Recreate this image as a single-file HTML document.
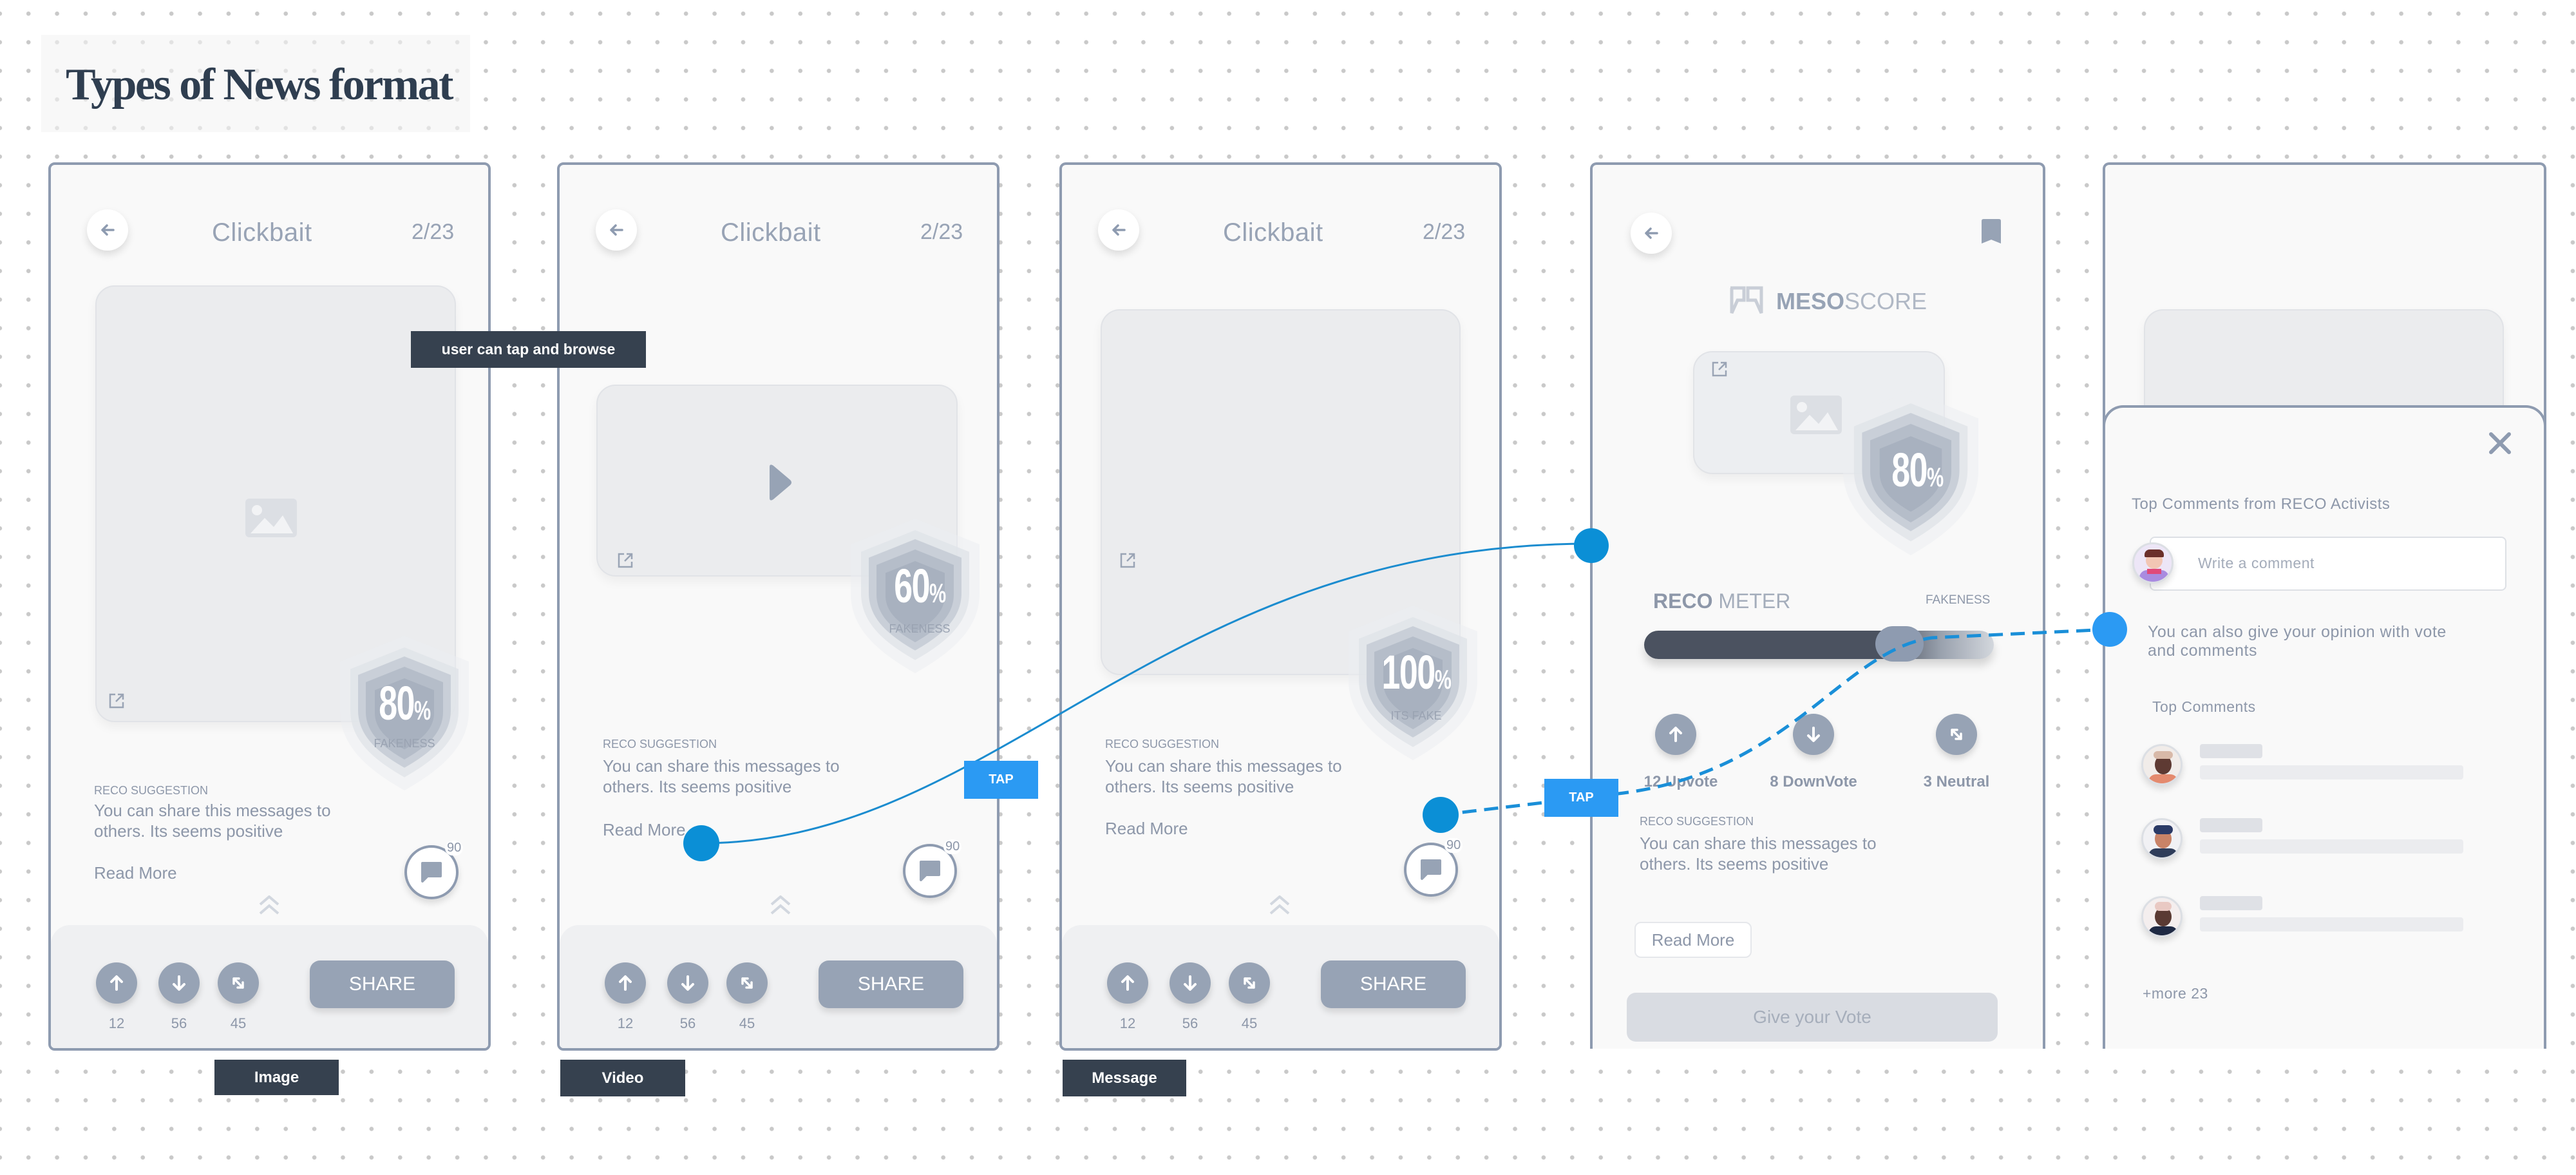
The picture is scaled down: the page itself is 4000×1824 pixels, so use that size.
<!DOCTYPE html>
<html><head><meta charset="utf-8"><style>
*{margin:0;padding:0;box-sizing:border-box}
body{width:4000px;height:1824px;position:relative;overflow:hidden;background:#fff;font-family:"Liberation Sans",sans-serif;color:#8d97a9}
.dots{position:absolute;left:0;top:0;width:4000px;height:1824px;background-image:radial-gradient(circle,#c9c9c9 3px,transparent 3.6px);background-size:44.4px 44.4px;background-position:22px -1px}
.a{position:absolute}
.ph{position:absolute;background:#f9f9f9;border:4px solid #8e9bb0;border-radius:10px;overflow:hidden}
.back{position:absolute;width:64px;height:64px;border-radius:50%;background:#fff;box-shadow:0 6px 12px rgba(0,0,0,.12)}
.t{position:absolute;white-space:nowrap}
.card{position:absolute;background:#ebecee;border:2px solid #e1e3e7;border-radius:30px;box-shadow:0 8px 16px rgba(0,0,0,.05)}
.panel{position:absolute;left:0;right:0;top:1180px;bottom:0;background:#eff0f2;border-radius:30px 30px 0 0}
.cb{position:absolute;width:64px;height:64px;border-radius:50%;background:#97a3b5;box-shadow:0 6px 10px rgba(0,0,0,.15)}
.share{position:absolute;width:225px;height:74px;border-radius:16px;background:#97a3b5;color:#fff;font-size:30px;text-align:center;line-height:74px;box-shadow:0 6px 10px rgba(0,0,0,.12)}
.num{position:absolute;font-size:22px;width:60px;text-align:center;color:#8d97a9}
.lbl{position:absolute;background:#36414f;color:#fff;font-weight:bold;font-size:24px;text-align:center}
.body{font-size:26px;line-height:32px}
.small{font-size:18px}
.com{position:absolute;width:84px;height:84px;border-radius:50%;background:#fff;border:4px solid #8e9bb0;box-shadow:0 6px 10px rgba(0,0,0,.12)}
.shnum{position:absolute;color:#fff;font-weight:bold;text-align:center;white-space:nowrap;transform:scaleX(.7);letter-spacing:-2px}
.bar1{position:absolute;height:22px;width:97px;background:#dfe1e6;border-radius:4px}
.bar2{position:absolute;height:22px;width:409px;background:#ebecef;border-radius:4px}
.av{position:absolute;width:64px;height:64px;border-radius:50%;border:3px solid #dcdfe4;background:#f3f0f5;overflow:hidden;box-shadow:0 6px 10px rgba(0,0,0,.12)}
.tap{position:absolute;background:#2b9af3;color:#fff;font-weight:bold;font-size:20px;text-align:center}
.dot{position:absolute;border-radius:50%;background:#0b8fd6}
.ttl{position:absolute;font-size:40px;color:#98a3b5;line-height:46px;left:250px;top:82px;letter-spacing:.5px}
</style></head><body>
<div class="dots"></div>

<div class="a" style="left:64px;top:54px;width:666px;height:151px;background:rgba(244,244,244,.6)"></div>
<div class="t" style="left:102px;top:92px;font-family:'Liberation Serif',serif;font-weight:bold;font-size:70px;letter-spacing:-2.5px;color:#2f3e50;line-height:80px">Types of News format</div>

<svg width="0" height="0" style="position:absolute"><defs>
<path id="sh" d="M50 0 L100 20 L100 58 C100 86 78 104 50 120 C22 104 0 86 0 58 L0 20 Z"/>
<g id="shield">
<use href="#sh" fill="#eceef1" opacity=".5"/>
<use href="#sh" transform="translate(8,9) scale(.84)" fill="#e0e3e8" opacity=".8"/>
<use href="#sh" transform="translate(14,16) scale(.72)" fill="#c9cfd8"/>
<use href="#sh" transform="translate(20,24) scale(.6)" fill="#b5bdc9"/>
<use href="#sh" transform="translate(27,33) scale(.46)" fill="#a8b1bf"/>
</g>
<g id="back"><path d="M8 16 H25 M8 16 L15 9 M8 16 L15 23" stroke="#8e9bb0" stroke-width="3.5" fill="none" stroke-linecap="round" stroke-linejoin="round"/></g>
<g id="ext"><path d="M12 4 H4 V24 H24 V16 M16 4 H24 V12 M24 4 L13 15" stroke="#9aa4b5" stroke-width="2.5" fill="none"/></g>
<g id="up"><path d="M16 26 V7 M8 14 L16 6 L24 14" stroke="#fff" stroke-width="4" fill="none" stroke-linecap="round" stroke-linejoin="round"/></g>
<g id="down"><path d="M16 6 V25 M8 18 L16 26 L24 18" stroke="#fff" stroke-width="4" fill="none" stroke-linecap="round" stroke-linejoin="round"/></g>
<g id="neu"><path d="M9 9 L23 23 M9 9 V17 M9 9 H17 M23 23 V15 M23 23 H15" stroke="#fff" stroke-width="3.5" fill="none" stroke-linecap="round"/></g>
<g id="img"><rect x="0" y="0" width="80" height="60" rx="6" fill="#dcdfe4"/><circle cx="18" cy="18" r="8" fill="#f2f3f5"/><path d="M8 54 L30 30 L44 44 L58 26 L74 54 Z" fill="#f2f3f5"/></g>
<g id="chev"><path d="M2 14 L16 2 L30 14 M2 28 L16 16 L30 28" stroke="#d2d7df" stroke-width="4" fill="none"/></g>
</defs></svg>

<!-- PHONE 1 -->
<div class="ph" style="left:75px;top:252px;width:687px;height:1379px">
 <div class="back" style="left:56px;top:69px"><svg width="64" height="64" viewBox="0 0 64 64"><use href="#back" transform="translate(16,16)"/></svg></div>
 <div class="ttl">Clickbait</div>
 <div class="t" style="left:560px;top:84px;font-size:34px;color:#98a3b5;line-height:40px">2/23</div>
 <div class="card" style="left:69px;top:187px;width:560px;height:678px"></div>
 <svg class="a" style="left:302px;top:518px" width="80" height="60"><use href="#img"/></svg>
 <svg class="a" style="left:88px;top:818px" width="30" height="30"><use href="#ext"/></svg>
 <svg class="a" style="left:449px;top:731px" width="200" height="240" viewBox="0 0 100 120"><use href="#shield"/></svg>
 <div class="shnum" style="left:449px;top:798px;width:200px;font-size:74px;line-height:76px">80<span style="font-size:42px">%</span></div>
 <div class="t small" style="left:449px;top:888px;width:200px;text-align:center;color:#9aa3b2">FAKENESS</div>
 <div class="t small" style="left:67px;top:961px">RECO SUGGESTION</div>
 <div class="t body" style="left:67px;top:986px">You can share this messages to<br>others. Its seems positive</div>
 <div class="t body" style="left:67px;top:1083px">Read More</div>
 <div class="com" style="left:549px;top:1056px"><svg width="76" height="76" viewBox="0 0 76 76"><path d="M24 24 H52 V44 H32 L24 52 Z" fill="#97a3b5" stroke="#97a3b5" stroke-width="4" stroke-linejoin="round"/></svg></div>
 <div class="t" style="left:612px;top:1049px;font-size:20px;background:#fff;border-radius:12px;padding:0 3px;color:#8d97a9">90</div>
 <svg class="a" style="left:323px;top:1134px" width="32" height="32"><use href="#chev"/></svg>
 <div class="panel"></div>
 <div class="cb" style="left:70px;top:1238px"><svg width="64" height="64"><use href="#up" transform="translate(16,16)"/></svg></div>
 <div class="cb" style="left:167px;top:1238px"><svg width="64" height="64"><use href="#down" transform="translate(16,16)"/></svg></div>
 <div class="cb" style="left:259px;top:1238px"><svg width="64" height="64"><use href="#neu" transform="translate(16,16)"/></svg></div>
 <div class="num" style="left:72px;top:1320px">12</div><div class="num" style="left:169px;top:1320px">56</div><div class="num" style="left:261px;top:1320px">45</div>
 <div class="share" style="left:402px;top:1235px">SHARE</div>
</div>

<!-- PHONE 2 -->
<div class="ph" style="left:865px;top:252px;width:687px;height:1379px">
 <div class="back" style="left:56px;top:69px"><svg width="64" height="64" viewBox="0 0 64 64"><use href="#back" transform="translate(16,16)"/></svg></div>
 <div class="ttl">Clickbait</div>
 <div class="t" style="left:560px;top:84px;font-size:34px;color:#98a3b5;line-height:40px">2/23</div>
 <div class="card" style="left:57px;top:341px;width:561px;height:298px"></div>
 <svg class="a" style="left:318px;top:463px" width="50" height="60"><path d="M8 6 Q8 0 14 4 L40 26 Q44 30 40 34 L14 56 Q8 60 8 54 Z" fill="#97a3b5"/></svg>
 <svg class="a" style="left:88px;top:600px" width="30" height="30"><use href="#ext"/></svg>
 <svg class="a" style="left:452px;top:549px" width="200" height="240" viewBox="0 0 100 120"><use href="#shield"/></svg>
 <div class="shnum" style="left:459px;top:616px;width:200px;font-size:74px;line-height:76px">60<span style="font-size:42px">%</span></div>
 <div class="t small" style="left:459px;top:710px;width:200px;text-align:center;color:#9aa3b2">FAKENESS</div>
 <div class="t small" style="left:67px;top:889px">RECO SUGGESTION</div>
 <div class="t body" style="left:67px;top:917px">You can share this messages to<br>others. Its seems positive</div>
 <div class="t body" style="left:67px;top:1016px">Read More</div>
 <div class="com" style="left:533px;top:1054px"><svg width="76" height="76" viewBox="0 0 76 76"><path d="M24 24 H52 V44 H32 L24 52 Z" fill="#97a3b5" stroke="#97a3b5" stroke-width="4" stroke-linejoin="round"/></svg></div>
 <div class="t" style="left:596px;top:1047px;font-size:20px;background:#fff;border-radius:12px;padding:0 3px">90</div>
 <svg class="a" style="left:327px;top:1134px" width="32" height="32"><use href="#chev"/></svg>
 <div class="panel"></div>
 <div class="cb" style="left:70px;top:1238px"><svg width="64" height="64"><use href="#up" transform="translate(16,16)"/></svg></div>
 <div class="cb" style="left:167px;top:1238px"><svg width="64" height="64"><use href="#down" transform="translate(16,16)"/></svg></div>
 <div class="cb" style="left:259px;top:1238px"><svg width="64" height="64"><use href="#neu" transform="translate(16,16)"/></svg></div>
 <div class="num" style="left:72px;top:1320px">12</div><div class="num" style="left:169px;top:1320px">56</div><div class="num" style="left:261px;top:1320px">45</div>
 <div class="share" style="left:402px;top:1235px">SHARE</div>
</div>

<!-- PHONE 3 -->
<div class="ph" style="left:1645px;top:252px;width:687px;height:1379px">
 <div class="back" style="left:56px;top:69px"><svg width="64" height="64" viewBox="0 0 64 64"><use href="#back" transform="translate(16,16)"/></svg></div>
 <div class="ttl">Clickbait</div>
 <div class="t" style="left:560px;top:84px;font-size:34px;color:#98a3b5;line-height:40px">2/23</div>
 <div class="card" style="left:60px;top:224px;width:559px;height:568px"></div>
 <svg class="a" style="left:88px;top:600px" width="30" height="30"><use href="#ext"/></svg>
 <svg class="a" style="left:445px;top:684px" width="200" height="240" viewBox="0 0 100 120"><use href="#shield"/></svg>
 <div class="shnum" style="left:450px;top:750px;width:200px;font-size:74px;line-height:76px">100<span style="font-size:42px">%</span></div>
 <div class="t small" style="left:450px;top:845px;width:200px;text-align:center;color:#9aa3b2">ITS FAKE</div>
 <div class="t small" style="left:67px;top:889px">RECO SUGGESTION</div>
 <div class="t body" style="left:67px;top:917px">You can share this messages to<br>others. Its seems positive</div>
 <div class="t body" style="left:67px;top:1014px">Read More</div>
 <div class="com" style="left:531px;top:1052px"><svg width="76" height="76" viewBox="0 0 76 76"><path d="M24 24 H52 V44 H32 L24 52 Z" fill="#97a3b5" stroke="#97a3b5" stroke-width="4" stroke-linejoin="round"/></svg></div>
 <div class="t" style="left:594px;top:1045px;font-size:20px;background:#fff;border-radius:12px;padding:0 3px">90</div>
 <svg class="a" style="left:322px;top:1134px" width="32" height="32"><use href="#chev"/></svg>
 <div class="panel"></div>
 <div class="cb" style="left:70px;top:1238px"><svg width="64" height="64"><use href="#up" transform="translate(16,16)"/></svg></div>
 <div class="cb" style="left:167px;top:1238px"><svg width="64" height="64"><use href="#down" transform="translate(16,16)"/></svg></div>
 <div class="cb" style="left:259px;top:1238px"><svg width="64" height="64"><use href="#neu" transform="translate(16,16)"/></svg></div>
 <div class="num" style="left:72px;top:1320px">12</div><div class="num" style="left:169px;top:1320px">56</div><div class="num" style="left:261px;top:1320px">45</div>
 <div class="share" style="left:402px;top:1235px">SHARE</div>
</div>

<div class="lbl" style="left:333px;top:1645px;width:193px;height:55px;line-height:55px">Image</div>
<div class="lbl" style="left:870px;top:1645px;width:194px;height:57px;line-height:57px">Video</div>
<div class="lbl" style="left:1650px;top:1645px;width:192px;height:57px;line-height:57px">Message</div>
<div class="lbl" style="left:638px;top:514px;width:365px;height:57px;line-height:57px;font-size:23px">user can tap and browse</div>

<!-- PHONE 4 -->
<div class="ph" style="left:2469px;top:252px;width:707px;height:1376px;border-bottom:none;border-radius:10px 10px 0 0">
 <div class="back" style="left:59px;top:74px"><svg width="64" height="64" viewBox="0 0 64 64"><use href="#back" transform="translate(16,16)"/></svg></div>
 <svg class="a" style="left:604px;top:84px" width="30" height="38"><path d="M0 3 Q0 0 3 0 H27 Q30 0 30 3 V38 L15 32 L0 38 Z" fill="#97a3b5"/></svg>
 <svg class="a" style="left:211px;top:188px" width="56" height="46"><path d="M3 3 H24 V22 H14 L5 42 V3 Z M30 3 H51 V42 L42 22 H30 Z" fill="none" stroke="#c9ced7" stroke-width="5"/></svg>
 <div class="t" style="left:285px;top:192px;font-size:36px;line-height:40px;color:#97a3b5"><b>MESO</b><span style="color:#b0b8c5">SCORE</span></div>
 <div class="card" style="left:156px;top:289px;width:391px;height:191px;background:#eceef1"></div>
 <svg class="a" style="left:307px;top:358px" width="80" height="60"><use href="#img"/></svg>
 <svg class="a" style="left:183px;top:303px" width="30" height="30"><use href="#ext"/></svg>
 <svg class="a" style="left:389px;top:351px" width="210" height="255" viewBox="0 0 100 120" preserveAspectRatio="none"><use href="#shield"/></svg>
 <div class="shnum" style="left:404px;top:436px;width:200px;font-size:74px;line-height:76px">80<span style="font-size:42px">%</span></div>
 <div class="t" style="left:94px;top:657px;font-size:32px;line-height:40px;color:#8d97a9"><b>RECO</b> <span style="color:#a4adbb">METER</span></div>
 <div class="t" style="left:517px;top:665px;font-size:19px;color:#8d97a9">FAKENESS</div>
 <div class="a" style="left:80px;top:723px;width:543px;height:44px;border-radius:22px;background:linear-gradient(90deg,#4b5260 0%,#4b5260 70%,#9aa2ae 85%,#d3d7dd 100%);box-shadow:0 10px 14px rgba(0,0,0,.15)"></div>
 <div class="a" style="left:439px;top:716px;width:75px;height:55px;border-radius:28px;background:#8e9bb0"></div>
 <div class="cb" style="left:97px;top:852px"><svg width="64" height="64"><use href="#up" transform="translate(16,16)"/></svg></div>
 <div class="cb" style="left:311px;top:852px"><svg width="64" height="64"><use href="#down" transform="translate(16,16)"/></svg></div>
 <div class="cb" style="left:533px;top:852px"><svg width="64" height="64"><use href="#neu" transform="translate(16,16)"/></svg></div>
 <div class="t" style="left:69px;top:944px;width:136px;text-align:center;font-size:24px;font-weight:bold">12 Upvote</div>
 <div class="t" style="left:263px;top:944px;width:160px;text-align:center;font-size:24px;font-weight:bold">8 DownVote</div>
 <div class="t" style="left:495px;top:944px;width:140px;text-align:center;font-size:24px;font-weight:bold">3 Neutral</div>
 <div class="t small" style="left:73px;top:1009px">RECO SUGGESTION</div>
 <div class="t body" style="left:73px;top:1037px">You can share this messages to<br>others. Its seems positive</div>
 <div class="a" style="left:65px;top:1175px;width:182px;height:56px;border:2px solid #e5e7eb;border-radius:10px;background:#fff;text-align:center;line-height:52px;font-size:26px">Read More</div>
 <div class="a" style="left:53px;top:1285px;width:576px;height:76px;border-radius:14px;background:#d9dce2;text-align:center;line-height:76px;font-size:28px;color:#a6aebb">Give your Vote</div>
</div>

<!-- PHONE 5 -->
<div class="ph" style="left:3265px;top:252px;width:689px;height:1376px;border-bottom:none;border-radius:10px 10px 0 0">
 <div class="card" style="left:60px;top:224px;width:559px;height:200px"></div>
</div>
<div class="a" style="left:3265px;top:629px;width:689px;height:999px;background:#f9f9f9;border:4px solid #8e9bb0;border-bottom:none;border-radius:32px 32px 0 0">
 <svg class="a" style="left:595px;top:37px" width="36" height="36"><path d="M4 4 L32 32 M32 4 L4 32" stroke="#8e9bb0" stroke-width="6" stroke-linecap="round"/></svg>
 <div class="t" style="left:41px;top:136px;font-size:24px;letter-spacing:.5px">Top Comments from RECO Activists</div>
 <div class="a" style="left:69px;top:200px;width:554px;height:84px;background:#fff;border:2px solid #dde0e5;border-radius:8px"></div>
 <div class="t" style="left:144px;top:228px;font-size:23px;color:#a4acba;letter-spacing:.5px">Write a comment</div>
 <div class="av" style="left:42px;top:209px;background:#ede6f7"><div class="a" style="left:18px;top:12px;width:26px;height:26px;border-radius:50%;background:#f2c6b4"></div><div class="a" style="left:16px;top:8px;width:30px;height:12px;border-radius:8px 8px 2px 2px;background:#6b2f2a"></div><div class="a" style="left:8px;top:40px;width:46px;height:24px;border-radius:12px 12px 0 0;background:#a98be0"></div><div class="a" style="left:20px;top:38px;width:22px;height:8px;background:#e04a7a"></div></div>
 <div class="t" style="left:66px;top:334px;font-size:25px;line-height:29px;letter-spacing:.5px">You can also give your opinion with vote<br>and comments</div>
 <div class="t" style="left:73px;top:451px;font-size:23px;letter-spacing:.5px">Top Comments</div>
 <div class="av" style="left:56px;top:522px;background:#f1ece9"><div class="a" style="left:18px;top:14px;width:26px;height:30px;border-radius:50%;background:#5e3a33"></div><div class="a" style="left:16px;top:8px;width:30px;height:12px;border-radius:10px;background:#d8b9a8"></div><div class="a" style="left:8px;top:44px;width:46px;height:20px;border-radius:12px 12px 0 0;background:#e48a6e"></div></div>
 <div class="av" style="left:56px;top:637px;background:#f1f1f4"><div class="a" style="left:18px;top:14px;width:26px;height:30px;border-radius:50%;background:#c98367"></div><div class="a" style="left:16px;top:8px;width:30px;height:14px;border-radius:10px;background:#2b3a66"></div><div class="a" style="left:8px;top:44px;width:46px;height:20px;border-radius:12px 12px 0 0;background:#2f3d5a"></div></div>
 <div class="av" style="left:56px;top:758px;background:#f4eeee"><div class="a" style="left:18px;top:14px;width:26px;height:30px;border-radius:50%;background:#5a3a33"></div><div class="a" style="left:18px;top:6px;width:26px;height:14px;border-radius:10px;background:#e9c9c3"></div><div class="a" style="left:8px;top:44px;width:46px;height:20px;border-radius:12px 12px 0 0;background:#1f2a44"></div></div>
 <div class="bar1" style="left:147px;top:522px"></div><div class="bar2" style="left:147px;top:555px"></div>
 <div class="bar1" style="left:147px;top:637px"></div><div class="bar2" style="left:147px;top:670px"></div>
 <div class="bar1" style="left:147px;top:758px"></div><div class="bar2" style="left:147px;top:791px"></div>
 <div class="t" style="left:58px;top:896px;font-size:23px;letter-spacing:.5px">+more 23</div>
</div>

<svg class="a" style="left:0;top:0" width="4000" height="1824">
 <path d="M1089 1309 C1550 1309 1800 844 2469 844" fill="none" stroke="#1b8ccf" stroke-width="3"/>
 <path d="M2237 1265 L2513 1232 C2780 1200 2860 1010 3000 990 L3276 977" fill="none" stroke="#1a8fd8" stroke-width="5" stroke-dasharray="22 12"/>
</svg>
<div class="tap" style="left:1497px;top:1181px;width:115px;height:59px;line-height:59px">TAP</div>
<div class="tap" style="left:2398px;top:1209px;width:115px;height:59px;line-height:59px">TAP</div>
<div class="dot" style="left:1061px;top:1281px;width:56px;height:56px"></div>
<div class="dot" style="left:2209px;top:1237px;width:56px;height:56px"></div>
<div class="dot" style="left:2444px;top:820px;width:54px;height:54px"></div>
<div class="dot" style="left:3249px;top:950px;width:54px;height:54px;background:#2b9af3"></div>
</body></html>
